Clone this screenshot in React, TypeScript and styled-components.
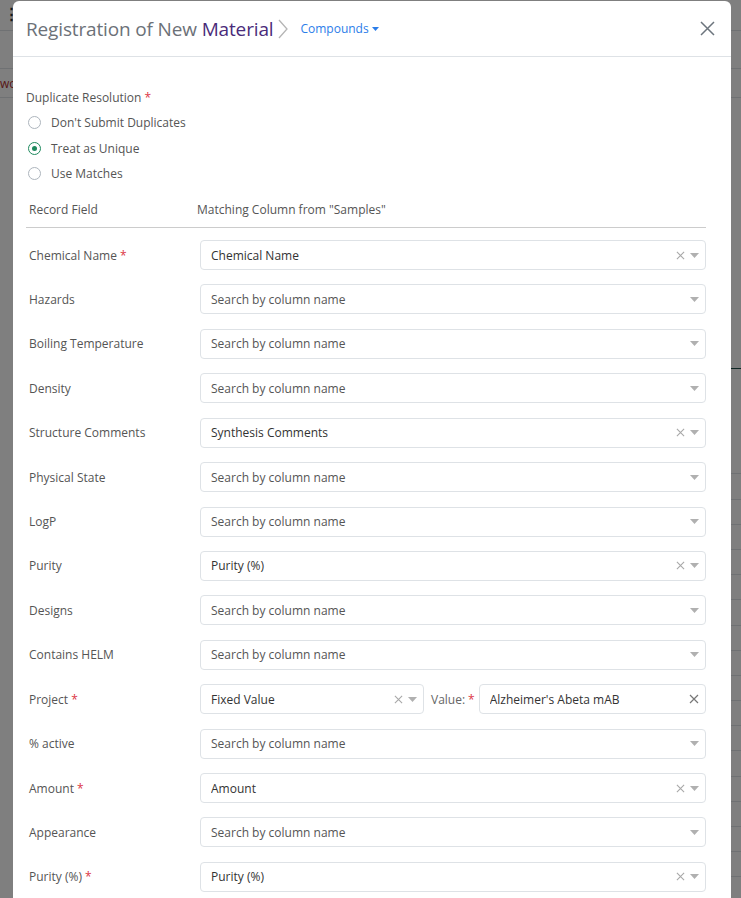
import styled, { createGlobalStyle } from "styled-components";

const GlobalStyle = createGlobalStyle`
    html, body {
        margin: 0;
        padding: 0;
        background: #ffffff;
        font-family: "Open Sans", "Noto Sans", sans-serif;
        color: #555;
    }
    * {
        box-sizing: border-box;
    }
`;

// underlying page (only its edges show around the modal)
const Page = styled.div`
    height: 100vh;
    overflow: hidden;
    background: #fff;
`;

const PageBar = styled.div<{ $h: number }>`
    height: ${({ $h }) => $h}px;
    border-bottom: 1px solid #dee2e6;
    display: flex;
    align-items: center;
    padding-left: 0;
    font-family: "Open Sans", sans-serif;
    font-size: 12px;
    color: #b03030;
`;

const DotsIcon = styled.span`
    color: #333;
    font-size: 15px;
    font-weight: 700;
    padding-left: 4px;
    margin-top: -4px;
`;

const PageSpacer = styled.div<{ $h: number }>`
    height: ${({ $h }) => $h}px;
`;

const PageRow = styled.div<{ $dark?: boolean }>`
    height: 25.2px;
    margin-left: 620px;
    border-bottom: 1px solid ${({ $dark }) => ($dark ? "#1f4e4a" : "#dee2e6")};
`;

const Overlay = styled.div`
    position: fixed;
    inset: 0;
    background: rgba(0, 0, 0, 0.5);
    overflow: hidden;
    padding: 1px 0 0 13px;
`;

const Modal = styled.div`
    width: 718px;
    background: #fff;
    border-radius: 6px;
`;

const ModalHeader = styled.div`
    height: 56px;
    border-bottom: 1px solid #dee2e6;
    display: flex;
    align-items: center;
    padding: 0 12px 0 13px;
`;

const Title = styled.h4`
    margin: 0;
    font-size: 19px;
    font-weight: 400;
    color: #6c7178;
    letter-spacing: -0.15px;
`;

const TitleAccent = styled.span`
    color: #4a2c7a;
`;

const Crumb = styled.span`
    margin: 0 12px 0 5px;
    display: flex;
    align-items: center;
`;

const TypeLink = styled.span`
    font-size: 12px;
    color: #2b7de9;
    display: flex;
    align-items: center;
    gap: 3px;
`;

const CloseButton = styled.button`
    margin-left: auto;
    border: none;
    background: none;
    padding: 4px;
    display: flex;
    cursor: pointer;
`;

const ModalBody = styled.div`
    padding: 32px 25px 20px 13px;
    font-size: 12px;
`;

const FieldLabel = styled.div`
    line-height: 18px;
    color: #555;
    margin-bottom: 3px;
`;

const Required = styled.span`
    color: #dc3545;
    margin-left: 3px;
`;

const RadioRow = styled.label`
    height: 25.5px;
    display: flex;
    align-items: center;
    gap: 10px;
    padding-left: 2px;
    color: #555;
`;

const RadioCircle = styled.span<{ $checked?: boolean }>`
    width: 13px;
    height: 13px;
    border-radius: 50%;
    border: 1px solid ${({ $checked }) => ($checked ? "#1e8a5e" : "#adb5bd")};
    display: flex;
    align-items: center;
    justify-content: center;

    &::after {
        content: "";
        width: 5px;
        height: 5px;
        border-radius: 50%;
        background: ${({ $checked }) => ($checked ? "#1e8a5e" : "transparent")};
    }
`;

const ColumnHeader = styled.div`
    margin-top: 14.5px;
    display: grid;
    grid-template-columns: 168px 1fr;
    padding: 0 0 8px 3px;
    line-height: 18px;
    border-bottom: 1px solid #ccc;
    color: #555;
`;

const Rows = styled.div`
    margin-top: 12px;
    display: flex;
    flex-direction: column;
    gap: 14.43px;
`;

const Row = styled.div`
    display: grid;
    grid-template-columns: 174px 1fr;
    align-items: center;
`;

const RowLabel = styled.div`
    padding-left: 3px;
    color: #555;
`;

const Controls = styled.div`
    display: flex;
    align-items: center;
    gap: 7px;
`;

const SelectBox = styled.div<{ $width?: number }>`
    height: 30px;
    ${({ $width }) => ($width ? `width: ${$width}px;` : "flex: 1;")}
    border: 1px solid #dee2e6;
    border-radius: 4px;
    display: flex;
    align-items: center;
    padding: 0 6px 0 10px;
    background: #fff;
`;

const SelectText = styled.span<{ $placeholder?: boolean }>`
    flex: 1;
    color: ${({ $placeholder }) => ($placeholder ? "#555" : "#333")};
    white-space: nowrap;
    overflow: hidden;
`;

const SelectIcons = styled.span`
    display: flex;
    align-items: center;
    gap: 5px;
`;

const ValueLabel = styled.span`
    color: #666;
    white-space: nowrap;
    margin-right: -3px;
`;

const ClearX = ({ size = 9, color = "#a8a8a8" }: { size?: number; color?: string }) => (
    <svg width={size} height={size} viewBox="0 0 10 10">
        <path d="M1 1L9 9M9 1L1 9" stroke={color} strokeWidth="1.2" fill="none" />
    </svg>
);

const Caret = ({ color = "#b0b0b0" }: { color?: string }) => (
    <svg width="9" height="5" viewBox="0 0 9 5">
        <path d="M0 0H9L4.5 5Z" fill={color} />
    </svg>
);

type FieldRow = {
    label: string;
    required?: boolean;
    value?: string;
};

const rows: FieldRow[] = [
    { label: "Chemical Name", required: true, value: "Chemical Name" },
    { label: "Hazards" },
    { label: "Boiling Temperature" },
    { label: "Density" },
    { label: "Structure Comments", value: "Synthesis Comments" },
    { label: "Physical State" },
    { label: "LogP" },
    { label: "Purity", value: "Purity (%)" },
    { label: "Designs" },
    { label: "Contains HELM" },
    { label: "Project", required: true, value: "Fixed Value" },
    { label: "% active" },
    { label: "Amount", required: true, value: "Amount" },
    { label: "Appearance" },
    { label: "Purity (%)", required: true, value: "Purity (%)" },
];

const ColumnSelect = ({ value, width }: { value?: string; width?: number }) => (
    <SelectBox $width={width}>
        <SelectText $placeholder={!value}>{value ?? "Search by column name"}</SelectText>
        <SelectIcons>
            {value && <ClearX />}
            <Caret />
        </SelectIcons>
    </SelectBox>
);

export default function App() {
    return (
        <>
            <GlobalStyle />
            <Page>
                <PageBar $h={31}>
                    <DotsIcon>⋮</DotsIcon>
                </PageBar>
                <PageBar $h={38} />
                <PageBar $h={29}>wo</PageBar>
                <PageSpacer $h={246} />
                <PageRow $dark />
                <PageSpacer $h={80} />
                {Array.from({ length: 17 }).map((_, i) => (
                    <PageRow key={i} />
                ))}
            </Page>
            <Overlay>
                <Modal>
                    <ModalHeader>
                        <Title>
                            Registration of New <TitleAccent>Material</TitleAccent>
                        </Title>
                        <Crumb>
                            <svg width="10" height="20" viewBox="0 0 10 20">
                                <path d="M1 1L9 10L1 19" stroke="#b5b5b5" strokeWidth="1.3" fill="none" />
                            </svg>
                        </Crumb>
                        <TypeLink>
                            Compounds
                            <svg width="7" height="4" viewBox="0 0 7 4">
                                <path d="M0 0H7L3.5 4Z" fill="#2b7de9" />
                            </svg>
                        </TypeLink>
                        <CloseButton aria-label="Close">
                            <svg width="15" height="15" viewBox="0 0 15 15">
                                <path d="M1 1L14 14M14 1L1 14" stroke="#6c757d" strokeWidth="1.5" fill="none" />
                            </svg>
                        </CloseButton>
                    </ModalHeader>
                    <ModalBody>
                        <FieldLabel>
                            Duplicate Resolution<Required>*</Required>
                        </FieldLabel>
                        <RadioRow>
                            <RadioCircle />
                            Don't Submit Duplicates
                        </RadioRow>
                        <RadioRow>
                            <RadioCircle $checked />
                            Treat as Unique
                        </RadioRow>
                        <RadioRow>
                            <RadioCircle />
                            Use Matches
                        </RadioRow>
                        <ColumnHeader>
                            <span>Record Field</span>
                            <span>Matching Column from "Samples"</span>
                        </ColumnHeader>
                        <Rows>
                            {rows.map((row) => (
                                <Row key={row.label}>
                                    <RowLabel>
                                        {row.label}
                                        {row.required && <Required>*</Required>}
                                    </RowLabel>
                                    {row.label === "Project" ? (
                                        <Controls>
                                            <ColumnSelect value={row.value} width={224} />
                                            <ValueLabel>
                                                Value:<Required>*</Required>
                                            </ValueLabel>
                                            <SelectBox>
                                                <SelectText>Alzheimer's Abeta mAB</SelectText>
                                                <SelectIcons>
                                                    <ClearX size={10} color="#777" />
                                                </SelectIcons>
                                            </SelectBox>
                                        </Controls>
                                    ) : (
                                        <ColumnSelect value={row.value} />
                                    )}
                                </Row>
                            ))}
                        </Rows>
                    </ModalBody>
                </Modal>
            </Overlay>
        </>
    );
}
